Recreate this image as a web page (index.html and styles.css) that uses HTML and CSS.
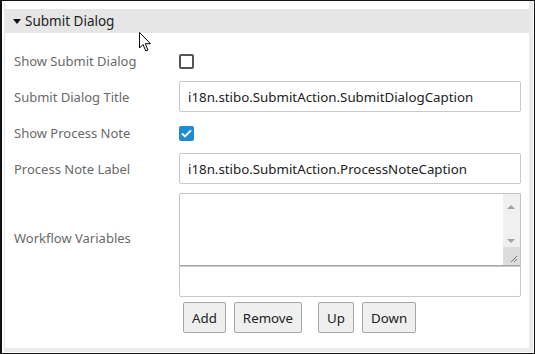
FILE: index.html
```html
<!DOCTYPE html>
<html lang="en">
	<head>
		<meta charset="utf-8" />
		<title>Submit Dialog</title>
		<link rel="stylesheet" href="styles.css">
	</head>

	<body>
		<div class="frame">
			<div class="panel">
				<div class="header">
					<span class="caret"></span>
					<span class="header-title">Submit Dialog</span>
				</div>

				<div class="form">
					<label class="label">Show Submit Dialog</label>
					<div class="cell">
						<span class="check"></span>
					</div>

					<label class="label">Submit Dialog Title</label>
					<div class="cell">
						<div class="field">i18n.stibo.SubmitAction.SubmitDialogCaption</div>
					</div>

					<label class="label">Show Process Note</label>
					<div class="cell">
						<span class="check checked">
							<svg width="11" height="9" viewBox="0 0 11 9">
								<path d="M1 4.6 L4 7.4 L10 1.4" fill="none" stroke="#fff" stroke-width="2" />
							</svg>
						</span>
					</div>

					<label class="label">Process Note Label</label>
					<div class="cell">
						<div class="field">i18n.stibo.SubmitAction.ProcessNoteCaption</div>
					</div>

					<label class="label label-top">Workflow Variables</label>
					<div class="cell cell-list">
						<div class="textbox">
							<div class="textbox-body"></div>
							<div class="scrollbar">
								<span class="arrow arrow-up"></span>
								<span class="arrow arrow-down"></span>
								<span class="grip">
									<svg width="17" height="18" viewBox="0 0 17 18">
										<path d="M8 15 L14 9 M11 15 L14 12" stroke="#777" stroke-width="1" />
									</svg>
								</span>
							</div>
						</div>
						<div class="field field-empty"></div>
						<div class="buttons">
							<button class="btn">Add</button>
							<button class="btn">Remove</button>
							<button class="btn btn-spaced">Up</button>
							<button class="btn">Down</button>
						</div>
					</div>
				</div>

				<!-- mouse pointer from the screenshot -->
				<svg class="pointer" width="14" height="21" viewBox="0 0 14 21">
					<path d="M0.5 0.5 L0.5 16 L4 12.5 L6.8 19 L9 18 L6.3 11.7 L11.5 11.7 Z" fill="#fff" stroke="#000" stroke-width="1" />
				</svg>
			</div>
		</div>
	</body>
</html>
```

FILE: styles.css
```css
body {
	margin: 0;
	font-family: "Noto Sans", "Open Sans", sans-serif;
	background: #fff;
}

.frame {
	width: 535px;
	height: 354px;
	box-sizing: border-box;
	border: 1px solid #111;
	border-left-width: 2px;
	padding: 0 1px 1px 2px;
	background: #fff;
}

.panel {
	position: relative;
	height: 100%;
	box-sizing: border-box;
	border-left: 1px solid #e6e6e6;
	border-right: 4px solid #ebebeb;
	border-bottom: 4px solid #ebebeb;
	padding-top: 8px;
}

.header {
	display: flex;
	align-items: center;
	height: 24px;
	padding-left: 8px;
	background: #e6e6e6;
	color: #222;
	font-size: 13.5px;
}

.caret {
	width: 0;
	height: 0;
	border-left: 4.5px solid transparent;
	border-right: 4.5px solid transparent;
	border-top: 5px solid #111;
	margin-right: 4px;
	margin-top: 1px;
}

.form {
	display: grid;
	grid-template-columns: 165px 342px;
	grid-auto-rows: minmax(31px, auto);
	row-gap: 5px;
	padding: 12px 0 0 9px;
}

.label {
	display: flex;
	align-items: center;
	color: #6a6a6a;
	font-size: 13px;
}

.label-top {
	align-items: flex-start;
	padding-top: 40px;
}

.cell {
	display: flex;
	align-items: center;
}

.check {
	display: flex;
	align-items: center;
	justify-content: center;
	width: 15px;
	height: 15px;
	box-sizing: border-box;
	border: 2px solid #555;
	border-radius: 2px;
	margin-top: 1px;
}

.check.checked {
	border: none;
	background: #1f8ad6;
}

.field {
	width: 100%;
	height: 31px;
	box-sizing: border-box;
	border: 1px solid #c9c9c9;
	border-radius: 2px;
	padding: 0 8px;
	display: flex;
	align-items: center;
	color: #222;
	font-size: 13.3px;
}

.cell-list {
	flex-direction: column;
	align-items: stretch;
	padding-top: 4px;
}

.textbox {
	display: flex;
	height: 73px;
	box-sizing: border-box;
	border: 1px solid #c2c2c2;
	border-bottom-color: #a9a9a9;
	border-radius: 2px 2px 0 0;
}

.textbox-body {
	flex: 1;
}

.scrollbar {
	position: relative;
	width: 17px;
	background: #f0f0f0;
}

.arrow {
	position: absolute;
	left: 4px;
	width: 0;
	height: 0;
	border-left: 4px solid transparent;
	border-right: 4px solid transparent;
}

.arrow-up {
	top: 11px;
	border-bottom: 4px solid #a3a3a3;
}

.arrow-down {
	top: 45px;
	border-top: 4px solid #a3a3a3;
}

.grip {
	position: absolute;
	left: 0;
	bottom: 0;
	width: 17px;
	height: 18px;
	background: #dcdcdc;
}

.field-empty {
	border-radius: 0 0 2px 2px;
}

.buttons {
	display: flex;
	gap: 8px;
	margin: 5px 0 0 4px;
}

.btn {
	height: 31px;
	padding: 0 8px;
	border: 1px solid #a6a6a6;
	border-radius: 2px;
	background: #efefef;
	color: #222;
	font-family: inherit;
	font-size: 13.3px;
}

.btn-spaced {
	margin-left: 8px;
}

.pointer {
	position: absolute;
	left: 134px;
	top: 31px;
}
```
